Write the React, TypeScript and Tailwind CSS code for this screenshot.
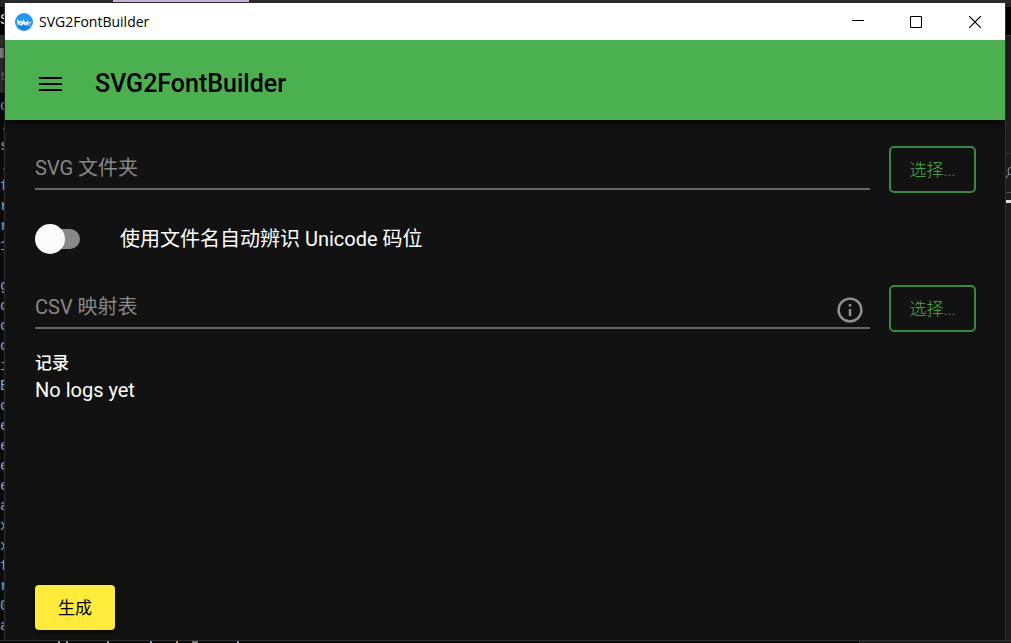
import { useState } from "react";

const editorLines = [
  "c", ".", "s", ".", "f", "r", "r", "1", "", "g", "c", "c", "c", "i", "E", "c", "e",
  "e", "e", "e", "a", "x", "x", "f", "r", "0", "a",
];

function AppLogo() {
  return (
    <svg viewBox="0 0 18 18" className="size-[18px]" aria-hidden="true">
      <circle cx="9" cy="9" r="9" fill="#2196f3" />
      <path d="M3.500 13.500 8 12.500l6.500 1-2 2.500-3.500 1.200-3.500-1z" fill="#1c7fd0" />
      <path d="M1.800 6 4.200 8.400 5 7.200l2.600 2 .4-3.400 2.600 4 2.600-3-.4 2.600 3.600-.6-.8 1.400-2.800.4-.6 1.400-2.400.2-1-1.600-2 2.400-2.600-1.800-1.600.8z" fill="#f4faff" />
      <path d="M11.500 11.500h4v1h-4z" fill="#9fd0f8" />
      <path d="m5 9.500 1.500 1.600-1.700-.2z" fill="#2196f3" />
    </svg>
  );
}

function FileField({ label, info = false }: { label: string; info?: boolean }) {
  return (
    <div className="flex items-start gap-[19px]">
      <div className="flex h-11 min-w-0 flex-1 items-center border-b-2 border-[#666] pr-[7px]">
        <input
          type="text"
          aria-label={label}
          placeholder={label}
          className="h-[42px] min-w-0 flex-1 bg-transparent pt-[2px] text-[20px] text-white outline-none placeholder:text-[#888]"
        />
        {info && (
          <button type="button" aria-label="Info" className="mt-2">
            <svg viewBox="0 0 26 26" className="size-[26px]" fill="none" stroke="#929292" strokeWidth="2.400">
              <circle cx="13" cy="13" r="11.400" />
              <path d="M13 12v7M13 7v2.500" />
            </svg>
          </button>
        )}
      </div>
      <button
        type="button"
        className="h-[47px] w-[87px] rounded-[5px] border-2 border-[#3b8840] pt-[2px] text-[17px] font-light text-[#4caf50]"
      >
        选择...
      </button>
    </div>
  );
}

export default function App() {
  const [auto, setAuto] = useState(false);
  return (
    <div className="flex h-screen min-h-[480px] flex-col overflow-hidden bg-[#1c1c1c] font-['Roboto','Noto_Sans_CJK_SC',sans-serif]">
      <div className="flex h-[3px] shrink-0 bg-[#2a2a2c] pl-[113px]">
        <div className="h-[2px] w-[136px] bg-[#cdb0dc]" />
      </div>
      <div className="flex min-h-0 flex-1">
        <div
          aria-hidden="true"
          className="flex w-[5px] shrink-0 flex-col overflow-hidden border-r border-[#303030] bg-[#0a0a0a] font-['Liberation_Mono',monospace] text-[15px] leading-5 text-[#79a9cf]"
        >
          <div className="h-1 shrink-0 bg-[#252526]" />
          <div className="h-7 shrink-0 bg-black leading-7 text-[#ddd]">S</div>
          <div className="h-[13px] shrink-0 bg-[#303030]" />
          <div className="h-[10px] shrink-0 bg-[#888]" />
          <div className="mb-1 h-[35px] shrink-0 bg-[#303030] leading-[38px] text-[#888]">s</div>
          {editorLines.map((text, i) => (
            <div key={i} className="h-5 shrink-0">
              {text}
            </div>
          ))}
        </div>
        <div className="flex min-w-0 flex-1 flex-col bg-[#121212] text-white">
          <div className="relative z-10 flex h-[37px] shrink-0 items-center bg-white text-black">
            <div className="flex flex-1 items-center gap-[6px] pl-[10px]">
              <AppLogo />
              <span className="font-['Open_Sans',sans-serif] text-[14px]">SVG2FontBuilder</span>
            </div>
            <button type="button" aria-label="Minimize" className="flex h-full w-[58px] items-center justify-center">
              <svg viewBox="0 0 12 12" className="size-3" stroke="currentColor" shapeRendering="crispEdges">
                <path d="M0 4.500h12" />
              </svg>
            </button>
            <button type="button" aria-label="Maximize" className="flex h-full w-[58px] items-center justify-center">
              <svg viewBox="0 0 12 12" className="size-3" stroke="currentColor" fill="none">
                <path d="M.5.5h11v11H.5z" />
              </svg>
            </button>
            <button type="button" aria-label="Close" className="flex h-full w-[60px] items-center justify-center">
              <svg viewBox="0 0 12 12" className="size-3" stroke="currentColor" strokeWidth="1.200">
                <path d="m0 0 12 12M12 0 0 12" />
              </svg>
            </button>
          </div>
          <header className="flex h-20 shrink-0 items-center gap-[33px] bg-[#4caf50] px-[33px] pt-2 text-black shadow-[0_3px_8px_rgba(0,0,0,0.8)]">
            <button type="button" aria-label="Menu">
              <svg viewBox="0 0 24 16" className="h-4 w-6" fill="currentColor">
                <path d="M1 1h23v2H1zM1 7h23v2H1zM1 13h23v2H1z" />
              </svg>
            </button>
            <h1 className="text-[25px] font-medium leading-8">SVG2FontBuilder</h1>
          </header>
          <main className="flex min-h-0 flex-1 flex-col pt-[26px] pr-[29px] pb-[10px] pl-[30px]">
            <FileField label="SVG 文件夹" />
            <label className="my-[31px] flex h-[30px] shrink-0 cursor-pointer items-center gap-10">
              <input
                type="checkbox"
                role="switch"
                checked={auto}
                onChange={(e) => setAuto(e.target.checked)}
                className="peer sr-only"
              />
              <span className="flex h-5 w-[45px] items-center rounded-full bg-linear-to-r from-transparent from-20% to-[#888] to-20% peer-checked:justify-end peer-checked:from-[#4caf50]">
                <span className="size-[30px] shrink-0 rounded-full bg-[#fafafa]" />
              </span>
              <span className="text-[20px]">使用文件名自动辨识 Unicode 码位</span>
            </label>
            <FileField label="CSV 映射表" info />
            <section className="mt-[18px] min-h-0 flex-1 overflow-hidden">
              <h2 className="text-[17px] font-medium leading-[26px]">记录</h2>
              <p className="text-[20px] leading-7">No logs yet</p>
            </section>
            <button
              type="button"
              className="h-[45px] w-20 shrink-0 rounded-[4px] bg-[#ffeb3b] pt-[2px] text-[17px] text-black shadow-[0_2px_5px_rgba(0,0,0,0.7)]"
            >
              生成
            </button>
          </main>
        </div>
        <div aria-hidden="true" className="flex w-[6px] shrink-0 flex-col overflow-hidden border-l border-[#303030] bg-[#1c1c1c]">
          <div className="h-1 shrink-0 bg-[#252526]" />
          <div className="h-7 shrink-0 bg-black" />
          <div className="h-[119px] shrink-0 border-y border-[#303030]" />
          <svg viewBox="0 0 5 38" className="h-[38px] w-[5px] shrink-0" fill="none" stroke="#8794a0">
            <circle cx="6" cy="17" r="4" />
            <path d="m3 20-3 4" />
          </svg>
          <div className="h-[8px] shrink-0 border-t border-[#555]" />
          <div className="h-[3px] shrink-0 bg-[#ddd]" />
        </div>
      </div>
      <div
        aria-hidden="true"
        className="flex h-[3px] shrink-0 overflow-hidden border-t border-[#303030] bg-[#080808] pl-[58px]"
      >
        <div className="flex flex-1 gap-[6px]">
          <i className="w-[2px] bg-[#8297a8]" />
          <i className="mr-[33px] w-[2px] bg-[#8297a8]" />
          <i className="mr-[35px] w-[2px] bg-[#8297a8]" />
          <i className="mr-[18px] w-[2px] bg-[#8297a8]" />
          <i className="mr-[8px] w-[2px] bg-[#b08a60]" />
          <i className="mr-[33px] w-[6px] bg-[#777]" />
          <i className="w-[2px] bg-[#8297a8]" />
        </div>
        <div className="w-[152px] border-l border-[#444] bg-[#1c1c1c]" />
      </div>
    </div>
  );
}
